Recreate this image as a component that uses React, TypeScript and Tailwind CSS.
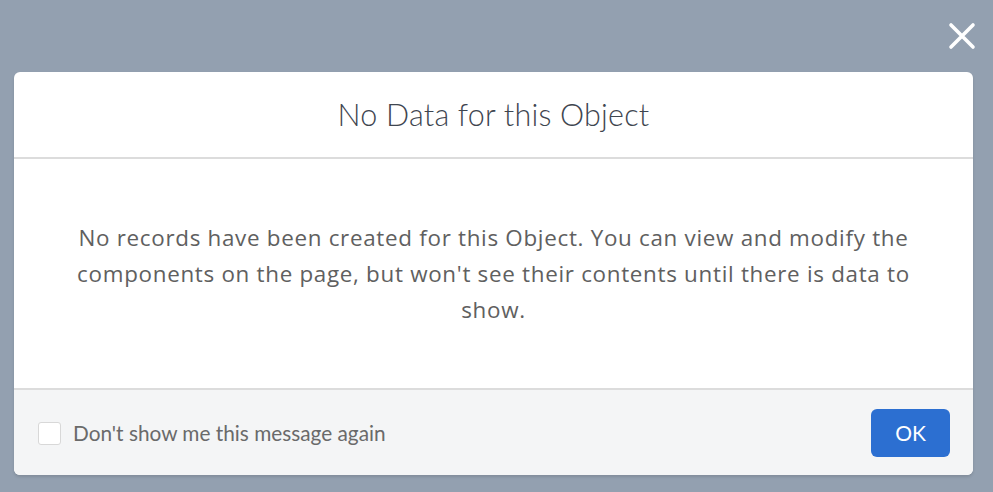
export default function App() {
  return (
    <div
      className="h-[492px] w-[993px] bg-[#93a0b0] overflow-hidden"
      style={{ fontFamily: "Lato, 'Noto Sans', sans-serif" }}
    >
      {/* close button row */}
      <div className="h-[72px] flex justify-end items-start pt-[22px] pr-[17px]">
        <button className="w-[28px] h-[28px] flex items-center justify-center">
          <svg width="28" height="28" viewBox="0 0 28 28">
            <path
              d="M3 3 L25 25 M25 3 L3 25"
              stroke="#ffffff"
              strokeWidth="3.6"
              strokeLinecap="round"
            />
          </svg>
        </button>
      </div>

      {/* modal */}
      <div className="ml-[14px] w-[959px] bg-white rounded-[6px] shadow-[0_2px_3px_rgba(0,0,0,0.12)] overflow-hidden">
        <div className="h-[87px] flex items-center justify-center border-b-2 border-[#dcdcdc]">
          <h2 className="text-[30.5px] font-light text-[#3f4650] tracking-[0.2px] pt-[1px]">
            No Data for this Object
          </h2>
        </div>

        <div className="h-[229px] flex items-center justify-center">
          <p
            className="text-center text-[22.4px] leading-[36px] tracking-[0.7px] text-[#606060]"
            style={{ fontFamily: "'Open Sans', sans-serif" }}
          >
            No records have been created for this Object. You can view and modify the
            <br />
            components on the page, but won't see their contents until there is data to
            <br />
            show.
          </p>
        </div>

        <div className="h-[87px] bg-[#f4f5f6] border-t-2 border-[#dcdcdc] flex items-center justify-between pl-[24px] pr-[23px]">
          <label className="flex items-center gap-[12px] text-[20.8px] text-[#6a6a6a] pt-[1px]">
            <span className="w-[23px] h-[23px] bg-white border border-[#d8d8d8] rounded-[3px]" />
            Don't show me this message again
          </label>
          <button className="w-[79px] h-[48px] rounded-[6px] bg-[#2c6fd1] text-white text-[21px]">
            OK
          </button>
        </div>
      </div>
    </div>
  );
}
